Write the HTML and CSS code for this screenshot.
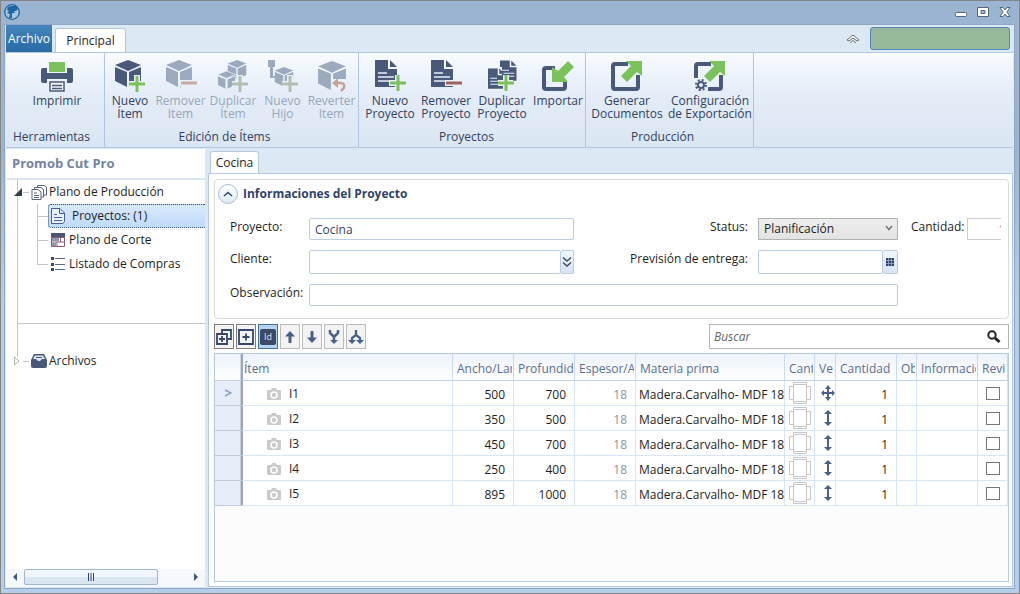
FILE: index.html
```html
<!DOCTYPE html>
<html lang="es">
<head>
    <meta charset="UTF-8">
    <meta name="viewport" content="width=device-width, initial-scale=1.0">
    <title>Promob Cut Pro</title>
    <link rel="stylesheet" href="styles.css">
</head>
<body>
    <!-- Shared icons -->
    <svg class="sprite" aria-hidden="true">
        <symbol id="cube" viewBox="0 0 28 28">
            <path d="M14 0L27 5L14 11L1 5ZM1 7L13 12V27L1 21ZM15 12L27 7V21L15 27Z"/>
        </symbol>
        <symbol id="doc" viewBox="0 0 24 28">
            <path d="M0 0H13V9H22V27H0Z"/>
            <path d="M15 0L22 7H15Z"/>
            <path d="M3 13H12M3 17H19M3 21H19" stroke="#e6eef8" stroke-width="1.5"/>
        </symbol>
        <symbol id="camera" viewBox="0 0 14 12">
            <path d="M1 2H4L5 0H9L10 2H13Q14 2 14 3V11Q14 12 13 12H1Q0 12 0 11V3Q0 2 1 2Z" fill="#cacaca"/>
            <circle cx="7" cy="7" r="3" fill="none" stroke="#fff" stroke-width="1.5"/>
        </symbol>
        <symbol id="edges" viewBox="0 0 22 22">
            <path d="M4.500 2.500H17.500V19.500H4.500ZM4.500 .5H17.500V2.500M4.500 .5V2.500M4.500 19.500V21.500H17.500V19.500M4.500 4.500H.5V17.500H4.500M17.500 4.500H21.500V17.500H17.500" fill="none" stroke="#c6c6c6"/>
        </symbol>
        <symbol id="vertical" viewBox="0 0 14 16">
            <path d="M7 0L11 4H8V12H11L7 16L3 12H6V4H3Z" fill="#48618a"/>
        </symbol>
        <symbol id="move" viewBox="0 0 14 16">
            <path d="M7 0L10 4H8V7H11V5L14 8L11 11V9H8V12H10L7 16L4 12H6V9H3V11L0 8L3 5V7H6V4H4Z" fill="#48618a"/>
        </symbol>
    </svg>

    <div class="window">
        <header class="titlebar">
            <svg class="logo" viewBox="0 0 16 16">
                <circle cx="8" cy="8" r="7.300" fill="#a6c6e2" stroke="#1f659f" stroke-width="1.300"/>
                <path d="M4 3L7 2L12 2L14 5L12 7L10 7L11 9L8 9L8 14L5 14L6 10L3 9L5 7L3 6Z" fill="#1f659f"/>
            </svg>
            <div class="window-buttons">
                <button aria-label="Minimizar"><svg viewBox="0 0 14 12"><rect x="1.500" y="6.500" width="11" height="4" rx="1" fill="#fff" stroke="#59677c"/></svg></button>
                <button aria-label="Maximizar"><svg viewBox="0 0 14 12"><path d="M1.500 1.500H12.500V10.500H1.500ZM5 4.500V7.500H9V4.500Z" fill="#fff" fill-rule="evenodd" stroke="#59677c"/></svg></button>
                <button aria-label="Cerrar"><svg viewBox="0 0 14 12"><path d="M2 1.500H5L7 4L9 1.500H12L8.800 6L12 10.500H9L7 8L5 10.500H2L5.200 6Z" fill="#fff" stroke="#59677c"/></svg></button>
            </div>
        </header>

        <div class="frame">
            <nav class="ribbon-tabs">
                <button class="tab-file">Archivo</button>
                <button class="tab-main">Principal</button>
                <button class="collapse" aria-label="Contraer"><svg viewBox="0 0 14 10"><path d="M1 6L7 1L13 6L11 7L7 4L3 7Z" fill="#fff" stroke="#666"/><path d="M4 9L7 6.500L10 9" fill="none" stroke="#777"/></svg></button>
                <div class="status-box"></div>
            </nav>

            <div class="ribbon">
                <section class="group tools">
                    <div class="buttons">
                        <button>
                            <svg viewBox="0 0 32 32">
                                <path d="M0 10Q0 8 2 8H6V13H26V8H30Q32 8 32 10V21Q32 23 30 23H26V19H6V23H2Q0 23 0 21Z" fill="#48597a"/>
                                <path d="M4 13H28V18H4Z" fill="#48597a"/>
                                <rect x="8" y="2" width="16" height="10" fill="#7cc25c"/>
                                <path d="M9 22H23V31H9ZM11 25.500H21M11 28.500H21" fill="#f2f6fc" stroke="#48597a" stroke-width="1.500"/>
                            </svg>
                            Imprimir
                        </button>
                    </div>
                    <h2>Herramientas</h2>
                </section>

                <section class="group items">
                    <div class="buttons">
                        <button>
                            <svg viewBox="0 0 32 32"><use href="#cube" width="28" height="28"/><path class="halo" d="M14 24H31M23 15V31"/><path class="plus" d="M15 24H31M23 16V32"/></svg>
                            Nuevo<br>Ítem
                        </button>
                        <button disabled>
                            <svg viewBox="0 0 32 32"><use href="#cube" width="28" height="28"/><path class="halo" d="M14 23H32"/><path class="minus" d="M16 23H32"/></svg>
                            Remover<br>Item
                        </button>
                        <button disabled>
                            <svg viewBox="0 0 32 32"><use href="#cube" x="10" width="20" height="20"/><use href="#cube" y="11" width="19" height="19" stroke="#eef4fb" stroke-width="1"/><path class="halo" d="M15 24H31M23 15V31"/><path class="plus" d="M15 24H31M23 16V32"/></svg>
                            Duplicar<br>Ítem
                        </button>
                        <button disabled>
                            <svg viewBox="0 0 32 32"><path d="M1 0H8V7H6V16H10V18H3V7H1Z"/><use href="#cube" x="7" y="7" width="20" height="20"/><path class="halo" d="M15 24H31M23 15V31"/><path class="plus" d="M15 24H31M23 16V32"/></svg>
                            Nuevo<br>Hijo
                        </button>
                        <button disabled>
                            <svg viewBox="0 0 32 32"><use href="#cube" x="1" y="1" width="30" height="30"/><path d="M17 19H31V32H17Z" fill="#e8f0f9"/><path d="M19 23H25Q29 23 28 28L25 31" fill="none" stroke="#c9a297" stroke-width="2.500"/><path d="M16 23L22 18V28Z" fill="#c9a297"/></svg>
                            Reverter<br>Item
                        </button>
                    </div>
                    <h2>Edición de Ítems</h2>
                </section>

                <section class="group projects">
                    <div class="buttons">
                        <button>
                            <svg viewBox="0 0 32 32"><use href="#doc" x="1" width="24" height="28"/><path class="halo" d="M15 23H32M24 15V32"/><path class="plus" d="M16 23H32M24 15V31"/></svg>
                            Nuevo<br>Proyecto
                        </button>
                        <button>
                            <svg viewBox="0 0 32 32"><use href="#doc" x="1" width="24" height="28"/><path class="halo" d="M15 23H32"/><path class="minus" d="M16 23H32"/></svg>
                            Remover<br>Proyecto
                        </button>
                        <button>
                            <svg viewBox="0 0 32 32"><use href="#doc" x="14" width="18" height="22"/><path d="M1 7H16V30H1Z" fill="#eef4fb"/><use href="#doc" x="2" y="8" width="18" height="22"/><path class="halo" d="M12 23H27M20 15V31"/><path class="plus" d="M12 23H28M20 15V31"/></svg>
                            Duplicar<br>Proyecto
                        </button>
                        <button>
                            <svg viewBox="0 0 32 32"><path d="M13 8H4Q2 8 2 10V27Q2 29 4 29H21Q23 29 23 27V21" fill="none" stroke="#48597a" stroke-width="4"/><path d="M10 7L16 11L26 1L32 7L22 17L26 22H10Z" fill="#7cc25c"/></svg>
                            Importar
                        </button>
                    </div>
                    <h2>Proyectos</h2>
                </section>

                <section class="group production">
                    <div class="buttons">
                        <button>
                            <svg viewBox="0 0 32 32"><path d="M17 4H4Q2 4 2 6V27Q2 29 4 29H25Q27 29 27 27V15" fill="none" stroke="#48597a" stroke-width="4"/><path d="M15 1H31V16L26 12L16 22L10 16L20 6Z" fill="#7cc25c"/></svg>
                            Generar<br>Documentos
                        </button>
                        <button>
                            <svg viewBox="0 0 32 32"><path d="M17 4H4Q2 4 2 6V18M14 29H25Q27 29 27 27V15" fill="none" stroke="#48597a" stroke-width="4"/><path d="M15 1H31V16L26 12L16 22L10 16L20 6Z" fill="#7cc25c"/><circle cx="7" cy="25" r="3" fill="none" stroke="#48597a" stroke-width="2"/><circle cx="7" cy="25" r="5" fill="none" stroke="#48597a" stroke-width="2" stroke-dasharray="2 1.930"/></svg>
                            Configuración<br>de Exportación
                        </button>
                    </div>
                    <h2>Producción</h2>
                </section>
            </div>

            <div class="workspace">
                <aside class="sidebar">
                    <h1>Promob Cut Pro</h1>
                    <div class="tree">
                        <div class="branch">
                            <div class="node">
                                <svg class="expander" viewBox="0 0 10 10"><path d="M9 1V9H1Z" fill="#333a4a"/></svg>
                                <span class="stub"></span>
                                <svg class="node-icon" viewBox="0 0 16 16"><g fill="#fff" stroke="#56647c"><path d="M6.500 1.500H13L15.500 3V11H6.500Z"/><path d="M3.500 3.500H10L12.500 5.500V13H3.500Z"/><path d="M1 5.500H7L10 8V15.500H1ZM3 9H6M3 11.500H8M3 13.500H8"/></g></svg>
                                <span>Plano de Producción</span>
                            </div>
                            <ul>
                                <li>
                                    <a href="#" class="selected">
                                        <svg class="node-icon" viewBox="0 0 16 16"><path d="M1.500 .5H10L14.500 5V13.500L13 15.500H1.500ZM9.500 .5V5.500H14.500M4 6.500H7M4 9.500H12M4 12.500H12" fill="#e8f1fb" stroke="#48618a"/></svg>
                                        Proyectos: (1)
                                    </a>
                                </li>
                                <li>
                                    <a href="#">
                                        <svg class="node-icon" viewBox="0 0 16 16"><path d="M1.500 1.500H14.500V14.500H1.500Z" fill="#fff" stroke="#8b5f6c"/><path d="M1 1H15V5H1Z" fill="#4a5672"/><path d="M2 6H9V9H2ZM2 11H6V14H2Z" fill="#8b98b4"/><path d="M1 5.500H15M1 10H15M10.500 5V10M7 10V15" stroke="#8b5f6c" fill="none"/></svg>
                                        Plano de Corte
                                    </a>
                                </li>
                                <li>
                                    <a href="#">
                                        <svg class="node-icon" viewBox="0 0 16 16"><path d="M1 1H4V4H1ZM1 7H4V10H1ZM1 12H4V15H1Z" fill="#3c4a66"/><path d="M5 2.500H15M5 8.500H15M5 13.500H15" stroke="#5a6c93"/></svg>
                                        Listado de Compras
                                    </a>
                                </li>
                            </ul>
                            <hr>
                        </div>
                        <div class="node last">
                            <svg class="expander" viewBox="0 0 10 10"><path d="M1.500 1L6 5L1.500 9Z" fill="#fff" stroke="#a9b3a9"/></svg>
                            <span class="stub"></span>
                            <svg class="node-icon" viewBox="0 0 16 16"><path d="M3 1H13L16 7V13Q16 15 14 15H2Q0 15 0 13V7Z" fill="#48597a"/><path d="M4 2.500H12L14 6H11L9 8H7L5 6H2Z" fill="#dfe7f2"/><path d="M5 4.500H11" stroke="#48597a"/></svg>
                            <span>Archivos</span>
                        </div>
                    </div>
                    <div class="scrollbar">
                        <svg viewBox="0 0 6 8"><path d="M5 0V8L1 4Z" fill="#41597f"/></svg>
                        <div class="thumb"><svg viewBox="0 0 6 8"><path d="M.5 0V8M3 0V8M5.500 0V8" stroke="#2c446e"/></svg></div>
                        <svg viewBox="0 0 6 8"><path d="M1 0V8L5 4Z" fill="#41597f"/></svg>
                    </div>
                </aside>

                <main class="content">
                    <div class="doc-tabs"><button>Cocina</button></div>
                    <div class="page">
                        <section class="info">
                            <div class="info-title">
                                <button aria-label="Contraer"><svg viewBox="0 0 10 6"><path d="M1 5L5 1.500L9 5" fill="none" stroke="#33496f" stroke-width="1.500"/></svg></button>
                                <h2>Informaciones del Proyecto</h2>
                            </div>
                            <form class="fields">
                                <label for="proyecto">Proyecto:</label>
                                <input id="proyecto" type="text" value="Cocina">
                                <label for="status" class="right">Status:</label>
                                <div class="select-wrap">
                                    <select id="status"><option>Planificación</option></select>
                                    <svg viewBox="0 0 8 6"><path d="M1 1L4 4.500L7 1" fill="none" stroke="#777" stroke-width="1.500"/></svg>
                                </div>
                                <div class="quantity">
                                    <label for="cantidad">Cantidad:</label>
                                    <input id="cantidad" type="text" value="1">
                                </div>

                                <label for="cliente">Cliente:</label>
                                <div class="combo">
                                    <input id="cliente" type="text">
                                    <button type="button" class="narrow" aria-label="Elegir cliente"><svg viewBox="0 0 10 12"><path d="M1 1.500L5 5L9 1.500M1 6.500L5 10L9 6.500" fill="none" stroke="#3c4a66" stroke-width="1.500"/></svg></button>
                                </div>
                                <label for="entrega" class="right">Previsión de entrega:</label>
                                <div class="combo date">
                                    <input id="entrega" type="text">
                                    <button type="button" aria-label="Calendario"><svg viewBox="0 0 8 8"><path d="M0 0H8V8H0Z" fill="#2f4468"/><path d="M0 2.500H8M0 5.500H8M2.500 0V8M5.500 0V8" stroke="#b8c8e0" stroke-width=".6"/></svg></button>
                                </div>

                                <label for="observacion" class="line">Observación:</label>
                                <input id="observacion" class="wide" type="text">
                            </form>
                        </section>

                        <div class="toolbar">
                            <button class="dark" aria-label="Expandir todo"><svg viewBox="0 0 16 16"><path d="M6 4V1H15V10H12" fill="none" stroke="#36476b" stroke-width="1.800"/><path d="M1 5H11V15H1ZM6 7V13M3 10H9" fill="none" stroke="#36476b" stroke-width="1.800"/></svg></button>
                            <button class="dark" aria-label="Expandir"><svg viewBox="0 0 16 16"><path d="M1 1H15V15H1ZM8 4.500V11.500M4.500 8H11.500" fill="none" stroke="#36476b" stroke-width="1.800"/></svg></button>
                            <button class="active" aria-label="Mostrar Id"><span>Id</span></button>
                            <button aria-label="Subir"><svg viewBox="0 0 16 16"><path d="M8 2L13 7.500H9.500V14H6.500V7.500H3Z" fill="#48618a"/></svg></button>
                            <button aria-label="Bajar"><svg viewBox="0 0 16 16"><path d="M8 14L13 8.500H9.500V2H6.500V8.500H3Z" fill="#48618a"/></svg></button>
                            <button aria-label="Unir"><svg viewBox="0 0 16 16"><path d="M4 1V4L8 8L12 4V1M8 8V12" fill="none" stroke="#48618a" stroke-width="2.500"/><path d="M4 11H12L8 15Z" fill="#48618a"/></svg></button>
                            <button aria-label="Separar"><svg viewBox="0 0 16 16"><path d="M8 1V6L4 9V12M8 6L12 9V12" fill="none" stroke="#48618a" stroke-width="2.300"/><path d="M0 11H8L4 15ZM8 11H16L12 15Z" fill="#48618a"/></svg></button>
                            <div class="search">
                                <input type="text" placeholder="Buscar" aria-label="Buscar">
                                <svg viewBox="0 0 14 14"><circle cx="5" cy="5" r="3.700" fill="none" stroke="#222" stroke-width="2"/><path d="M8 8L12.500 12" stroke="#222" stroke-width="3"/></svg>
                            </div>
                        </div>

                        <div class="grid">
                            <table>
                                <colgroup>
                                    <col class="w-mark"><col><col class="w-num"><col class="w-num"><col class="w-num"><col class="w-material"><col class="w-edge"><col class="w-vein"><col class="w-num"><col class="w-obs"><col class="w-num"><col class="w-check">
                                </colgroup>
                                <thead>
                                    <tr>
                                        <th></th>
                                        <th class="item-head">Ítem</th>
                                        <th><div>Ancho/Lar</div></th>
                                        <th><div>Profundid</div></th>
                                        <th><div>Espesor/A</div></th>
                                        <th><div>Materia prima</div></th>
                                        <th><div>Cant</div></th>
                                        <th><div>Ve</div></th>
                                        <th><div>Cantidad</div></th>
                                        <th><div>Ob</div></th>
                                        <th><div>Informacic</div></th>
                                        <th><div>Revi</div></th>
                                    </tr>
                                </thead>
                                <tbody>
                                    <tr>
                                        <td class="mark"><svg viewBox="0 0 8 8"><path d="M1 1L7 4L1 7" fill="none" stroke="#8ba3c7" stroke-width="1.500"/></svg></td>
                                        <td class="item"><svg><use href="#camera"/></svg>I1</td>
                                        <td>500</td><td>700</td><td class="muted">18</td>
                                        <td class="material">Madera.Carvalho- MDF 18</td>
                                        <td class="edge"><svg><use href="#edges"/></svg></td>
                                        <td class="vein"><svg><use href="#move"/></svg></td>
                                        <td>1</td><td></td><td></td>
                                        <td class="check"><input type="checkbox" aria-label="Revisado I1"></td>
                                    </tr>
                                    <tr>
                                        <td class="mark"></td>
                                        <td class="item"><svg><use href="#camera"/></svg>I2</td>
                                        <td>350</td><td>500</td><td class="muted">18</td>
                                        <td class="material">Madera.Carvalho- MDF 18</td>
                                        <td class="edge"><svg><use href="#edges"/></svg></td>
                                        <td class="vein"><svg><use href="#vertical"/></svg></td>
                                        <td>1</td><td></td><td></td>
                                        <td class="check"><input type="checkbox" aria-label="Revisado I2"></td>
                                    </tr>
                                    <tr>
                                        <td class="mark"></td>
                                        <td class="item"><svg><use href="#camera"/></svg>I3</td>
                                        <td>450</td><td>700</td><td class="muted">18</td>
                                        <td class="material">Madera.Carvalho- MDF 18</td>
                                        <td class="edge"><svg><use href="#edges"/></svg></td>
                                        <td class="vein"><svg><use href="#vertical"/></svg></td>
                                        <td>1</td><td></td><td></td>
                                        <td class="check"><input type="checkbox" aria-label="Revisado I3"></td>
                                    </tr>
                                    <tr>
                                        <td class="mark"></td>
                                        <td class="item"><svg><use href="#camera"/></svg>I4</td>
                                        <td>250</td><td>400</td><td class="muted">18</td>
                                        <td class="material">Madera.Carvalho- MDF 18</td>
                                        <td class="edge"><svg><use href="#edges"/></svg></td>
                                        <td class="vein"><svg><use href="#vertical"/></svg></td>
                                        <td>1</td><td></td><td></td>
                                        <td class="check"><input type="checkbox" aria-label="Revisado I4"></td>
                                    </tr>
                                    <tr>
                                        <td class="mark"></td>
                                        <td class="item"><svg><use href="#camera"/></svg>I5</td>
                                        <td>895</td><td>1000</td><td class="muted">18</td>
                                        <td class="material">Madera.Carvalho- MDF 18</td>
                                        <td class="edge"><svg><use href="#edges"/></svg></td>
                                        <td class="vein"><svg><use href="#vertical"/></svg></td>
                                        <td>1</td><td></td><td></td>
                                        <td class="check"><input type="checkbox" aria-label="Revisado I5"></td>
                                    </tr>
                                </tbody>
                            </table>
                        </div>
                    </div>
                </main>
            </div>
        </div>
    </div>
</body>
</html>
```
FILE: styles.css
```css
* {
    margin: 0;
    padding: 0;
    box-sizing: border-box;
}

body {
    font-family: "Open Sans", "Noto Sans", sans-serif;
    font-size: 12px;
    line-height: 16px;
    color: #1e1e1e;
}

button, input, select {
    font: inherit;
    color: inherit;
}

button {
    background: none;
    border: none;
}

svg {
    display: block;
    flex: none;
}

.sprite {
    position: absolute;
    width: 0;
    height: 0;
}

/* Window */
.window {
    min-height: 100vh;
    display: flex;
    flex-direction: column;
    padding: 0 4px 4px 3px;
    border: 1px solid #858585;
    background: linear-gradient(#9ab4d1, #9ab4d1 150px, #b5cfeb 300px);
}

.titlebar {
    height: 23px;
    display: flex;
    align-items: center;
    justify-content: space-between;
    padding-bottom: 2px;
}

.logo {
    width: 16px;
    height: 16px;
}

.window-buttons {
    display: flex;
    gap: 8px;
    padding-right: 3px;
}

.window-buttons svg {
    width: 14px;
    height: 12px;
}

.frame {
    flex: 1;
    display: flex;
    flex-direction: column;
    padding: 0 1px 1px 1px;
    border: 1px solid #8fa6c6;
    background: #dde8f5;
}

/* Ribbon */
.ribbon-tabs {
    height: 28px;
    display: flex;
    align-items: flex-end;
    border-bottom: 1px solid #b4c8df;
}

.tab-file {
    width: 46px;
    height: 27px;
    color: #fff;
    background: linear-gradient(#4385bc, #286aa5);
}

.tab-main {
    width: 71px;
    height: 24px;
    margin-left: 3px;
    border: 1px solid #b4c8df;
    border-bottom: none;
    border-radius: 3px 3px 0 0;
    background: #fff;
}

.collapse {
    align-self: center;
    margin-left: auto;
}

.collapse svg {
    width: 14px;
    height: 10px;
}

.status-box {
    align-self: center;
    width: 140px;
    height: 23px;
    margin: 0 3px 0 10px;
    border: 1px solid #4f86bd;
    border-radius: 3px;
    background: #98ba9c;
}

.ribbon {
    height: 95px;
    display: flex;
    border-bottom: 1px solid #b4c8df;
    background: linear-gradient(#f8fbff, #e4edf8 40px, #dae6f3);
}

.group {
    display: flex;
    flex-direction: column;
    justify-content: space-between;
    padding: 7px 0 2px;
    border-right: 1px solid #b0c4dc;
}

.group .buttons {
    display: grid;
    align-items: start;
}

.group button {
    line-height: 13px;
    color: #33415f;
    white-space: nowrap;
}

.group button:disabled {
    color: #99a6b9;
}

.group button svg {
    width: 32px;
    height: 32px;
    margin: 0 auto 2px;
    fill: #48597a;
}

.group button:disabled svg {
    fill: #9caac0;
}

.group h2 {
    padding-right: 14px;
    font-size: 12px;
    font-weight: normal;
    text-align: center;
    color: #33415f;
}

.halo {
    stroke: #eaf1fa;
    stroke-width: 6;
}

.plus {
    stroke: #7cc25c;
    stroke-width: 3;
}

.minus {
    stroke: #a0605c;
    stroke-width: 3;
}

button:disabled .plus {
    stroke: #b0c0b0;
}

button:disabled .minus {
    stroke: #c9a9a2;
}

.tools { width: 99px; }
.tools .buttons { padding-left: 4px; }
.tools h2 { text-align: left; padding: 0 0 0 7px; }
.items { width: 254px; }
.items .buttons { grid-template-columns: 50px 51px 54px 45px 53px; }
.projects { width: 227px; padding-left: 3px; }
.projects .buttons { grid-template-columns: repeat(4, 56px); }
.production { width: 168px; }
.production .buttons { grid-template-columns: 82px 84px; }

/* Sidebar */
.workspace {
    flex: 1;
    display: flex;
}

.sidebar {
    width: 199px;
    display: flex;
    flex-direction: column;
    border-left: 1px solid #fff;
    margin: 1px 3px 0 0;
    background: #fff;
}

.sidebar h1 {
    height: 31px;
    padding-left: 5px;
    border-bottom: 2px solid #dbe6f3;
    font-size: 13px;
    line-height: 29px;
    color: #74839f;
}

.tree {
    flex: 1;
    padding-left: 10px;
}

.branch {
    padding-bottom: 25px;
    border-left: 1px solid #c6c6c6;
}

.node {
    height: 24px;
    display: flex;
    align-items: center;
    gap: 2px;
}

.expander {
    width: 10px;
    height: 10px;
    margin-left: -5px;
}

.stub {
    width: 6px;
    border-top: 1px solid #c6c6c6;
    margin-left: -2px;
}

.node-icon {
    width: 16px;
    height: 16px;
}

.branch ul {
    list-style: none;
    margin-left: 19px;
}

.branch li {
    height: 24px;
    display: flex;
    background: linear-gradient(#c6c6c6, #c6c6c6) 0 12px / 10px 1px no-repeat;
    border-left: 1px solid #c6c6c6;
}

.branch li:last-child {
    border-left: none;
    padding-left: 1px;
    background: linear-gradient(#c6c6c6, #c6c6c6) 0 12px / 11px 1px no-repeat, linear-gradient(#c6c6c6, #c6c6c6) 0 0 / 1px 12px no-repeat;
}

.branch a {
    flex: 1;
    display: flex;
    align-items: center;
    gap: 3px;
    margin-left: 10px;
    padding-left: 2px;
    color: inherit;
    text-decoration: none;
}

.branch .selected {
    gap: 6px;
    padding-left: 1px;
    border: 1px dotted #35506f;
    border-right: none;
    border-radius: 3px 0 0 3px;
    background: linear-gradient(#d9e9fb, #bfdbfa);
}

.branch hr {
    margin-top: 47px;
    border: none;
    border-top: 1px solid #c6c6c6;
}

.last {
    background: linear-gradient(#c6c6c6, #c6c6c6) 0 0 / 1px 8px no-repeat;
}

.last .expander {
    margin-left: -4px;
}

.scrollbar {
    height: 18px;
    display: flex;
    align-items: center;
    padding: 0 6px 2px 5px;
    background: #f5f9fe;
}

.scrollbar svg {
    width: 6px;
    height: 8px;
}

.thumb {
    width: 134px;
    height: 16px;
    display: flex;
    align-items: center;
    justify-content: center;
    margin: 0 auto 0 6px;
    border: 1px solid #9fb6d2;
    border-radius: 2px;
    background: linear-gradient(#f0f6fc 50%, #d9e6f2 50%);
}

/* Document area */
.content {
    flex: 1;
    display: flex;
    flex-direction: column;
    min-width: 0;
}

.doc-tabs {
    height: 25px;
    display: flex;
    align-items: flex-end;
    padding-left: 2px;
}

.doc-tabs button {
    width: 49px;
    height: 22px;
    border: 1px solid #b4c8df;
    border-bottom: none;
    border-radius: 3px 3px 0 0;
    background: #fff;
}

.page {
    flex: 1;
    display: flex;
    flex-direction: column;
    padding: 5px 3px 4px 5px;
    border: 1px solid #b4c8df;
    background: #fff;
}

.info {
    height: 140px;
    padding: 4px 7px 0 15px;
    border: 1px solid #dadada;
    border-radius: 4px;
}

.info-title {
    display: flex;
    align-items: center;
    gap: 5px;
    margin: 0 0 14px -12px;
}

.info-title button {
    width: 20px;
    height: 20px;
    border: 1px solid #a9bcd8;
    border-radius: 50%;
    background: linear-gradient(#fff, #dde8f6);
}

.info-title svg {
    width: 10px;
    height: 6px;
    margin: auto;
}

.info-title h2 {
    font-size: 12px;
    color: #2f4468;
}

.fields {
    display: grid;
    grid-template-columns: 79px 265px 1fr 140px 103px;
    grid-template-rows: 22px 24px 22px;
    row-gap: 10px;
}

.fields label {
    line-height: 18px;
}

.fields .right {
    text-align: right;
    padding-right: 10px;
}

.fields input {
    width: 100%;
    height: 100%;
    min-width: 0;
    padding: 0 5px;
    border: 1px solid #b9cde4;
    border-radius: 2px;
    background: #fff;
    color: #33415f;
}

.select-wrap {
    position: relative;
}

.select-wrap select {
    width: 100%;
    height: 22px;
    padding-left: 5px;
    appearance: none;
    border: 1px solid #adb5ad;
    border-radius: 0;
    background: linear-gradient(#eee, #e3e3e3);
}

.select-wrap svg {
    position: absolute;
    right: 5px;
    top: 7px;
    width: 8px;
    height: 6px;
}

.quantity {
    display: flex;
    gap: 3px;
    padding-left: 13px;
    overflow: hidden;
}

.fields .quantity input {
    flex: none;
    width: 44px;
    border-color: #ccc;
    border-radius: 0;
    text-align: right;
    color: #a04a3c;
}

.combo {
    grid-column: 2;
    display: flex;
}

.date {
    grid-column: 4;
}

.combo input {
    flex: 1;
}

.combo button {
    width: 15px;
    display: flex;
    align-items: center;
    justify-content: center;
    border: 1px solid #b9cde4;
    border-left: none;
    border-radius: 2px;
    background: linear-gradient(#f0f6fc, #d6e3f3);
}

.combo .narrow {
    width: 13px;
}

.combo svg {
    width: 8px;
    height: 8px;
}

.combo .narrow svg {
    width: 10px;
    height: 12px;
}

.line {
    grid-column: 1;
}

.fields .wide {
    grid-column: 2 / 5;
}

/* Toolbar */
.toolbar {
    display: flex;
    gap: 2px;
    margin: 5px 0 4px;
}

.toolbar button {
    width: 20px;
    height: 25px;
    display: flex;
    align-items: center;
    justify-content: center;
    border: 1px solid #b9bdb9;
    background: #f3f3f3;
}

.toolbar .dark {
    border-color: #857c80;
}

.toolbar .active {
    border-color: #41719f;
    background: #b3d3ee;
}

.toolbar button svg {
    width: 16px;
    height: 16px;
}

.toolbar .active span {
    width: 16px;
    flex: none;
    border-radius: 2px;
    background: #3c4a66;
    color: #dfe7f2;
    font-size: 9px;
}

.search {
    width: 300px;
    height: 25px;
    display: flex;
    align-items: center;
    margin-left: auto;
    padding: 0 7px 0 4px;
    border: 1px solid #b5b5b5;
}

.search input {
    flex: 1;
    border: none;
    outline: none;
}

.search input::placeholder {
    color: #666;
    font-style: italic;
}

.search svg {
    width: 14px;
    height: 14px;
}

/* Items table */
.grid {
    flex: 1;
    border: 1px solid #b4c8df;
    background: #fcfcfc;
}

table {
    width: 100%;
    table-layout: fixed;
    border-collapse: separate;
    border-spacing: 0;
    background: #fff;
}

.w-mark { width: 26px; }
.w-num { width: 61px; }
.w-material { width: 149px; }
.w-edge { width: 30px; }
.w-vein { width: 21px; }
.w-obs { width: 20px; }
.w-check { width: 30px; }

th {
    height: 27px;
    padding: 3px 1px 0 4px;
    border-right: 1px solid #c9d9ee;
    border-bottom: 1px solid #c0cfe2;
    background: linear-gradient(#edf3fb, #fff);
    color: #5a6f94;
    font-weight: normal;
    text-align: left;
}

th div {
    overflow: hidden;
    white-space: nowrap;
}

td {
    height: 25px;
    padding: 3px 8px 0 0;
    border-right: 1px solid #d6e6f8;
    border-bottom: 1px solid #d6e6f8;
    text-align: right;
}

.item-head, .item {
    border-left: 2px solid #9ea5ae;
}

.item-head {
    padding-left: 1px;
}

.item {
    padding: 1px 0 0 24px;
    text-align: left;
}

.item svg {
    display: inline-block;
    width: 14px;
    height: 12px;
    margin-right: 8px;
    vertical-align: -2px;
}

.mark {
    padding: 0 9px;
    border-color: #c3cfe0;
    background: #e7edf9;
}

.mark svg {
    width: 8px;
    height: 8px;
}

.muted {
    color: #8c949e;
}

.material {
    padding: 3px 0 0 3px;
    text-align: left;
    white-space: nowrap;
}

.edge {
    padding: 0 0 0 4px;
}

.vein {
    padding: 0 0 0 6px;
}

.edge svg {
    width: 22px;
    height: 22px;
}

.vein svg {
    width: 14px;
    height: 16px;
}

.check {
    padding: 0;
    text-align: center;
}

.check input {
    width: 14px;
    height: 13px;
    display: block;
    margin: 0 auto;
    appearance: none;
    border: 1px solid #777;
    background: #fff;
}
```
